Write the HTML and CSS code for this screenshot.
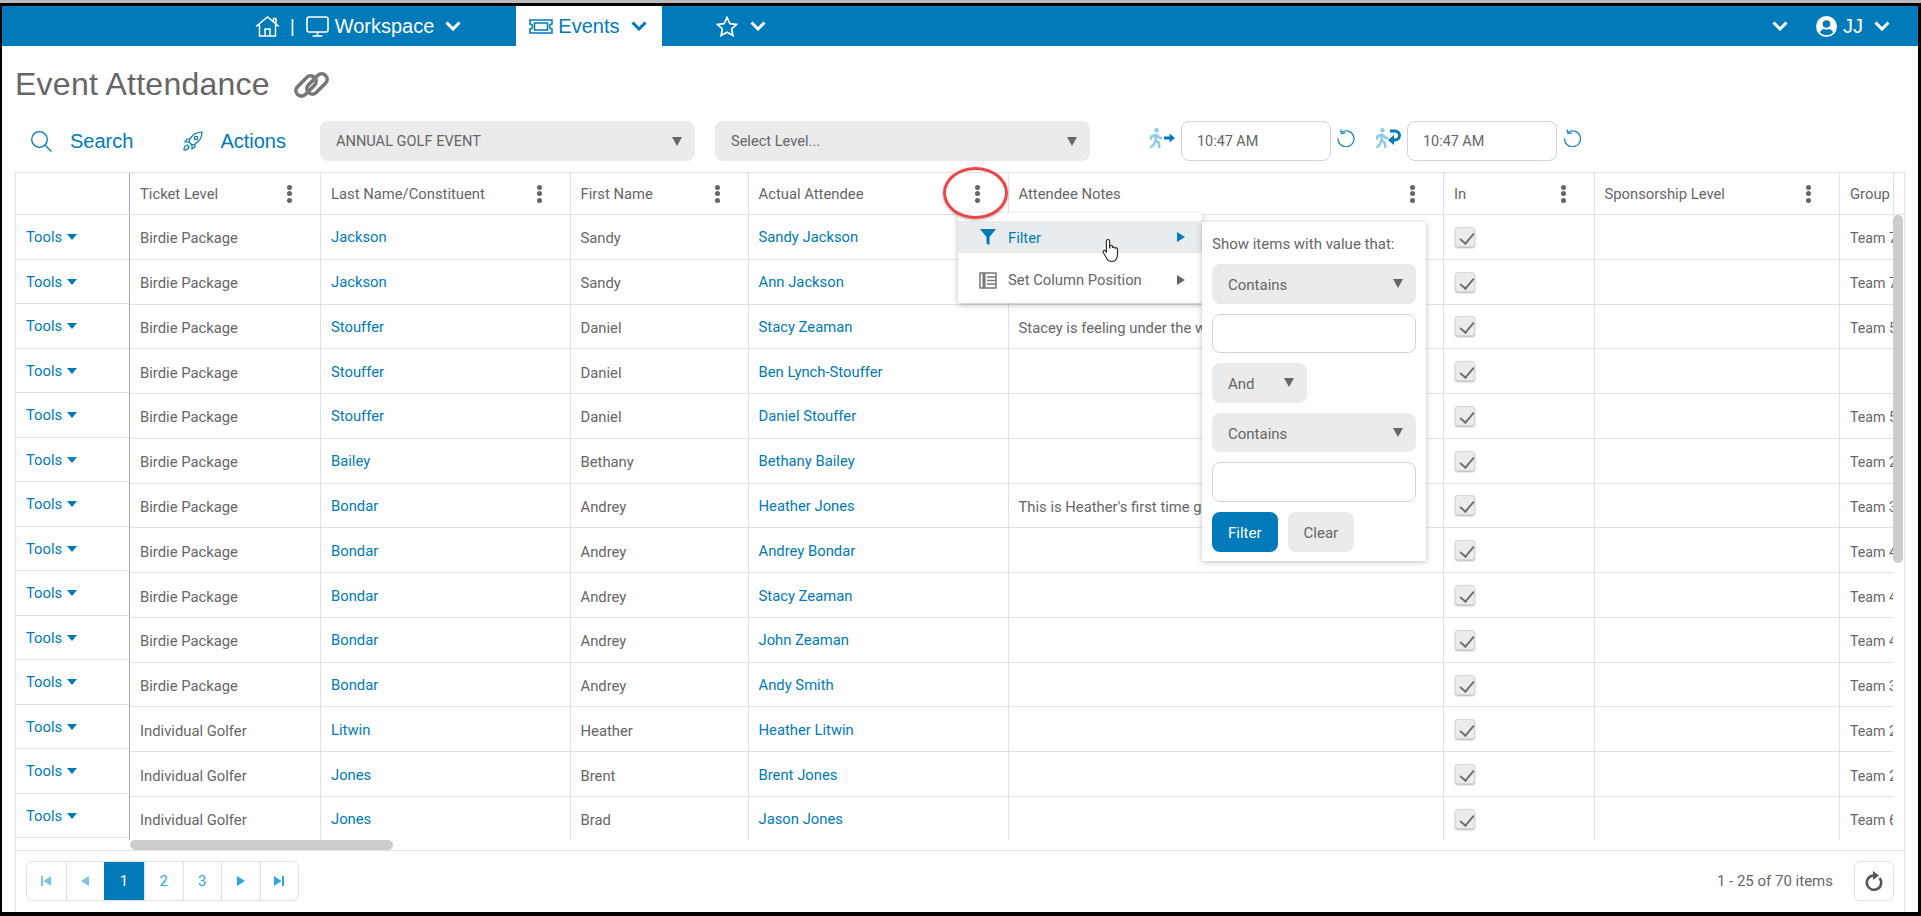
FILE: index.html
```html
<!DOCTYPE html>
<html lang="en">
<head>
  <meta charset="UTF-8" />
  <title>Event Attendance</title>
  <link rel="stylesheet" href="styles.css">
</head>
<body>
  <div class="page">
    <nav class="topnav">
      <svg class="home" width="25" height="21" viewBox="0 0 25 21" fill="none" stroke="#fff" stroke-width="1.5"><path d="M1 10.5 12.5 1 24 10.5M18.5 5.5V2.5H21V7.5M4.5 8.5V20H20.500V8.500M10 20v-7h5v7"/></svg>
      <span class="nav-sep">|</span>
      <svg class="monitor" width="23" height="21" viewBox="0 0 23 21" fill="none" stroke="#fff" stroke-width="1.6"><rect x="1" y="1" width="21" height="15" rx="2"/><path d="M11.500 16v4M6.500 20h10"/></svg>
      <span class="nav-label">Workspace</span>
      <svg class="chev" width="16" height="10" viewBox="0 0 16 10" fill="none" stroke="#fff" stroke-width="3"><path d="M1.500 1.500 8 8l6.500-6.500"/></svg>
      <div class="nav-tab">
        <svg width="24" height="15" viewBox="0 0 24 15" fill="none" stroke="#007ab8" stroke-width="1.500"><path d="M1 1H23V5a2.500 2.500 0 0 0 0 5v4H1V10a2.500 2.500 0 0 0 0-5Z"/><rect x="5.500" y="4" width="13" height="7"/></svg>
        <span class="nav-label">Events</span>
        <svg class="chev" width="16" height="10" viewBox="0 0 16 10" fill="none" stroke="#007ab8" stroke-width="3"><path d="M1.500 1.500 8 8l6.500-6.500"/></svg>
      </div>
      <svg class="star" width="22" height="21" viewBox="0 0 22 21" fill="none" stroke="#fff" stroke-width="1.700"><path d="M11 1.500 13.900 7.600 20.500 8.400 15.600 13 16.900 19.500 11 16.300 5.100 19.500 6.400 13 1.500 8.400 8.100 7.600Z"/></svg>
      <svg class="chev" width="16" height="10" viewBox="0 0 16 10" fill="none" stroke="#fff" stroke-width="3"><path d="M1.500 1.500 8 8l6.500-6.500"/></svg>
      <div class="nav-right">
        <svg class="chev-wide" width="16" height="10" viewBox="0 0 16 10" fill="none" stroke="#fff" stroke-width="3"><path d="M1.500 1.500 8 8l6.500-6.500"/></svg>
        <svg class="user" width="21" height="21" viewBox="0 0 21 21"><circle cx="10.500" cy="10.500" r="10.500" fill="#fff"/><circle cx="10.500" cy="8" r="3.800" fill="#007ab8"/><path d="M4 16.500c1-2.800 3-3.500 4-3.500 1.600.8 3.400.8 5 0 1 0 3 .7 4 3.500-3.600 3.500-9.400 3.500-13 0Z" fill="#007ab8"/></svg>
        <span class="nav-label">JJ</span>
        <svg class="chev" width="16" height="10" viewBox="0 0 16 10" fill="none" stroke="#fff" stroke-width="3"><path d="M1.500 1.500 8 8l6.500-6.500"/></svg>
      </div>
    </nav>

    <header class="title-bar">
      <h1>Event Attendance</h1>
      <svg width="37" height="28" viewBox="0 0 37 28" fill="none" stroke="#777" stroke-width="3.600"><rect x="1" y="9.500" width="24" height="11" rx="5.500" transform="rotate(-45 13 15)"/><rect x="12" y="7.500" width="24" height="11" rx="5.500" transform="rotate(-45 24 13)"/></svg>
    </header>

    <div class="toolbar">
      <svg class="tool-icon" width="21" height="21" viewBox="0 0 21 21" fill="none" stroke="#007ab8" stroke-width="1.300"><circle cx="8.500" cy="8.500" r="7.800"/><path d="m14 14 6.500 6.500"/></svg>
      <a class="tool-link search-link">Search</a>
      <svg class="tool-icon" width="21" height="21" viewBox="0 0 21 21" fill="none" stroke="#007ab8" stroke-width="1.200"><path d="M20 1c-5 0-9 2-12 7l-1 3 3 3 3-1c5-3 7-7 7-12Z"/><circle cx="14" cy="7" r="1.700"/><path d="M8 8H5L3 11h4M13 13v3l-3 2v-4M5 14c-2 .5-3 2.500-3 5 2.500 0 4.500-1 5-3Z"/></svg>
      <a class="tool-link actions-link">Actions</a>
      <div class="select select-wide"><span>ANNUAL GOLF EVENT</span><i class="caret"></i></div>
      <div class="select select-wide level"><span>Select Level...</span><i class="caret"></i></div>

      <svg class="walk-in" width="27" height="20" viewBox="0 0 27 20" fill="none"><circle cx="7.500" cy="2.200" r="2.200" fill="#8fcbe8"/><path d="M7 6 6.500 12 9.500 14.500 10.500 20M6.500 12 5 16 1.500 20M7 6.500 2.500 8.500 1.500 11.500M7 6.500 10 9.500 13 10.500" stroke="#8fcbe8" stroke-width="2.500"/><path d="M15 10h6" stroke="#007ab8" stroke-width="3"/><path d="M20.500 5.500 26 10l-5.500 4.500Z" fill="#007ab8"/></svg>
      <input class="time" value="10:47 AM">
      <svg class="undo" width="18" height="18" viewBox="0 0 18 18" fill="none" stroke="#1a86c4" stroke-width="1.300"><path d="M4.500 3.200A8 8 0 1 1 1 9.500"/><path d="M3.600.5 4.500 4.500 8.500 3.800"/></svg>
      <svg class="walk-back" width="25" height="20" viewBox="0 0 25 20" fill="none"><circle cx="6.500" cy="2.200" r="2.200" fill="#8fcbe8"/><path d="M6 6 5.500 12 8.500 14.500 9.500 20M5.500 12 4 16 .5 20M6 6.500 1.500 8.500.5 11.500M6 6.500 9 9.500 12 10.500" stroke="#8fcbe8" stroke-width="2.500"/><path d="M14 3h5a4.500 4.500 0 0 1 0 9h-2" stroke="#007ab8" stroke-width="3"/><path d="M18 7v10l-6-5Z" fill="#007ab8"/></svg>
      <input class="time" value="10:47 AM">
      <svg class="undo" width="19" height="18" viewBox="0 0 18 18" fill="none" stroke="#1a86c4" stroke-width="1.300"><path d="M4.500 3.200A8 8 0 1 1 1 9.500"/><path d="M3.600.5 4.500 4.500 8.500 3.800"/></svg>
    </div>

    <section class="grid">
      <div class="grid-head">
        <div class="frozen-head"></div>
        <div class="cols">
          <div class="hcell"><span>Ticket Level</span><i class="dots"></i></div>
          <div class="hcell"><span>Last Name/Constituent</span><i class="dots"></i></div>
          <div class="hcell"><span>First Name</span><i class="dots"></i></div>
          <div class="hcell"><span>Actual Attendee</span><i class="dots"></i></div>
          <div class="hcell"><span>Attendee Notes</span><i class="dots"></i></div>
          <div class="hcell"><span>In</span><i class="dots"></i></div>
          <div class="hcell"><span>Sponsorship Level</span><i class="dots"></i></div>
          <div class="hcell"><span>Group</span></div>
        </div>
        <div class="head-spacer"></div>
      </div>

      <div class="grid-body">
        <div class="frozen">
          <div class="tools">Tools<i class="tools-caret"></i></div>
          <div class="tools">Tools<i class="tools-caret"></i></div>
          <div class="tools">Tools<i class="tools-caret"></i></div>
          <div class="tools">Tools<i class="tools-caret"></i></div>
          <div class="tools">Tools<i class="tools-caret"></i></div>
          <div class="tools">Tools<i class="tools-caret"></i></div>
          <div class="tools">Tools<i class="tools-caret"></i></div>
          <div class="tools">Tools<i class="tools-caret"></i></div>
          <div class="tools">Tools<i class="tools-caret"></i></div>
          <div class="tools">Tools<i class="tools-caret"></i></div>
          <div class="tools">Tools<i class="tools-caret"></i></div>
          <div class="tools">Tools<i class="tools-caret"></i></div>
          <div class="tools">Tools<i class="tools-caret"></i></div>
          <div class="tools">Tools<i class="tools-caret"></i></div>
        </div>
        <div class="rows">
          <div class="cols row"><div class="cell">Birdie Package</div><div class="cell lnk">Jackson</div><div class="cell">Sandy</div><div class="cell lnk">Sandy Jackson</div><div class="cell"></div><div class="cell"><i class="check"></i></div><div class="cell"></div><div class="cell">Team 7</div></div>
          <div class="cols row"><div class="cell">Birdie Package</div><div class="cell lnk">Jackson</div><div class="cell">Sandy</div><div class="cell lnk">Ann Jackson</div><div class="cell"></div><div class="cell"><i class="check"></i></div><div class="cell"></div><div class="cell">Team 7</div></div>
          <div class="cols row"><div class="cell">Birdie Package</div><div class="cell lnk">Stouffer</div><div class="cell">Daniel</div><div class="cell lnk">Stacy Zeaman</div><div class="cell">Stacey is feeling under the weather</div><div class="cell"><i class="check"></i></div><div class="cell"></div><div class="cell">Team 5</div></div>
          <div class="cols row"><div class="cell">Birdie Package</div><div class="cell lnk">Stouffer</div><div class="cell">Daniel</div><div class="cell lnk">Ben Lynch-Stouffer</div><div class="cell"></div><div class="cell"><i class="check"></i></div><div class="cell"></div><div class="cell"></div></div>
          <div class="cols row"><div class="cell">Birdie Package</div><div class="cell lnk">Stouffer</div><div class="cell">Daniel</div><div class="cell lnk">Daniel Stouffer</div><div class="cell"></div><div class="cell"><i class="check"></i></div><div class="cell"></div><div class="cell">Team 5</div></div>
          <div class="cols row"><div class="cell">Birdie Package</div><div class="cell lnk">Bailey</div><div class="cell">Bethany</div><div class="cell lnk">Bethany Bailey</div><div class="cell"></div><div class="cell"><i class="check"></i></div><div class="cell"></div><div class="cell">Team 2</div></div>
          <div class="cols row"><div class="cell">Birdie Package</div><div class="cell lnk">Bondar</div><div class="cell">Andrey</div><div class="cell lnk">Heather Jones</div><div class="cell">This is Heather's first time golfing</div><div class="cell"><i class="check"></i></div><div class="cell"></div><div class="cell">Team 3</div></div>
          <div class="cols row"><div class="cell">Birdie Package</div><div class="cell lnk">Bondar</div><div class="cell">Andrey</div><div class="cell lnk">Andrey Bondar</div><div class="cell"></div><div class="cell"><i class="check"></i></div><div class="cell"></div><div class="cell">Team 4</div></div>
          <div class="cols row"><div class="cell">Birdie Package</div><div class="cell lnk">Bondar</div><div class="cell">Andrey</div><div class="cell lnk">Stacy Zeaman</div><div class="cell"></div><div class="cell"><i class="check"></i></div><div class="cell"></div><div class="cell">Team 4</div></div>
          <div class="cols row"><div class="cell">Birdie Package</div><div class="cell lnk">Bondar</div><div class="cell">Andrey</div><div class="cell lnk">John Zeaman</div><div class="cell"></div><div class="cell"><i class="check"></i></div><div class="cell"></div><div class="cell">Team 4</div></div>
          <div class="cols row"><div class="cell">Birdie Package</div><div class="cell lnk">Bondar</div><div class="cell">Andrey</div><div class="cell lnk">Andy Smith</div><div class="cell"></div><div class="cell"><i class="check"></i></div><div class="cell"></div><div class="cell">Team 3</div></div>
          <div class="cols row"><div class="cell">Individual Golfer</div><div class="cell lnk">Litwin</div><div class="cell">Heather</div><div class="cell lnk">Heather Litwin</div><div class="cell"></div><div class="cell"><i class="check"></i></div><div class="cell"></div><div class="cell">Team 2</div></div>
          <div class="cols row"><div class="cell">Individual Golfer</div><div class="cell lnk">Jones</div><div class="cell">Brent</div><div class="cell lnk">Brent Jones</div><div class="cell"></div><div class="cell"><i class="check"></i></div><div class="cell"></div><div class="cell">Team 2</div></div>
          <div class="cols row"><div class="cell">Individual Golfer</div><div class="cell lnk">Jones</div><div class="cell">Brad</div><div class="cell lnk">Jason Jones</div><div class="cell"></div><div class="cell"><i class="check"></i></div><div class="cell"></div><div class="cell">Team 6</div></div>
        </div>
        <div class="vscroll"></div>
      </div>

      <div class="hscroll"><div class="hthumb"></div></div>

      <footer class="pager-bar">
        <div class="pager">
          <a class="pg pg-off"><svg width="10" height="10" viewBox="0 0 10 10"><path d="M0 0h2v10H0ZM10 0v10L2.500 5Z"/></svg></a>
          <a class="pg pg-off"><svg width="8" height="10" viewBox="0 0 8 10"><path d="M8 0v10L0 5Z"/></svg></a>
          <a class="pg pg-active">1</a>
          <a class="pg">2</a>
          <a class="pg">3</a>
          <a class="pg"><svg width="8" height="10" viewBox="0 0 8 10"><path d="M0 0v10l8-5Z"/></svg></a>
          <a class="pg"><svg width="10" height="10" viewBox="0 0 10 10"><path d="M0 0v10l7.500-5ZM8 0h2v10H8Z"/></svg></a>
        </div>
        <span class="count">1 - 25 of 70 items</span>
        <a class="refresh"><svg width="18" height="20" viewBox="0 0 18 20" fill="none" stroke="#555" stroke-width="2.600"><path d="M14.500 7A7.200 7.200 0 1 1 8 4.500"/><path d="M8 0v9l6-4.500Z" fill="#555" stroke="none"/></svg></a>
      </footer>
    </section>
  </div>

  <div class="col-menu">
    <div class="menu-item on">
      <svg width="16" height="16" viewBox="0 0 16 16"><path d="M0 0h16L9.500 8v8l-3-1.500V8Z" fill="#007ab8"/></svg>
      <span>Filter</span><i class="arrow"></i>
    </div>
    <div class="menu-item">
      <svg width="18" height="17" viewBox="0 0 18 17" fill="none" stroke="#777" stroke-width="1.500"><rect x="1" y="1" width="16" height="15"/><path d="M5 1v15" stroke-width="3"/><path d="M8 5h9M8 8.500h9M8 12h9"/></svg>
      <span>Set Column Position</span><i class="arrow"></i>
    </div>
  </div>

  <div class="filter-panel">
    <div class="filter-label">Show items with value that:</div>
    <div class="select"><span>Contains</span><i class="caret"></i></div>
    <input class="filter-input">
    <div class="select select-and"><span>And</span><i class="caret"></i></div>
    <div class="select"><span>Contains</span><i class="caret"></i></div>
    <input class="filter-input">
    <div class="filter-btns">
      <button class="btn-filter">Filter</button>
      <button class="btn-clear">Clear</button>
    </div>
  </div>

  <div class="red-ring"></div>
  <svg class="hand" width="18" height="25" viewBox="0 0 18 25"><path d="M6 1.500c1 0 1.600.7 1.600 1.600V10h.3V8.500c0-1.600 2.600-1.600 2.600 0V10c0-1.400 2.500-1.400 2.500.2v.6c0-1.300 2.500-1.200 2.500.4V17c0 3-2 6.500-5.500 6.500-3 0-4.500-1.500-5.500-3.500L1.200 14.500c-.8-1.500 1-2.700 2.200-1.600L4.400 14V3c0-.9.6-1.500 1.600-1.500Z" fill="#fff" stroke="#222" stroke-width="1.100"/></svg>
</body>
</html>
```

FILE: styles.css
```css
* {
  box-sizing: border-box;
}

html,
body {
  margin: 0;
  height: 916px;
  overflow: hidden;
}

body {
  position: relative;
  background: #000;
  font-family: Roboto, Arial, sans-serif;
  font-size: 14.8px;
  color: #666;
}

i {
  display: block;
}

.page {
  height: 912px;
  margin: 0 3px 0 2px;
  background: #fff;
  border-top: 6px solid #000;
  position: relative;
}

/* the light strip over the black frame */
body::before {
  content: "";
  display: block;
  position: absolute;
  top: 0;
  left: 0;
  right: 0;
  height: 3px;
  background: #bbb;
  z-index: 1;
}

.topnav {
  display: flex;
  align-items: center;
  height: 40px;
  padding-left: 253px;
  background: #007ab8;
  color: #fff;
  font-family: "Liberation Sans", Arial, sans-serif;
  font-size: 20px;
}

.nav-sep {
  margin: 0 11px 0 10px;
  font-size: 18px;
}

.nav-label {
  margin-left: 6px;
}

.topnav .chev {
  margin-left: 11px;
}

.nav-tab {
  display: flex;
  align-items: center;
  height: 40px;
  margin-left: 55px;
  padding: 0 15px 0 13px;
  background: #fff;
  color: #007ab8;
}

.nav-tab .nav-label {
  margin-left: 5px;
}

.star {
  margin-left: 54px;
}

.topnav .star + .chev {
  margin-left: 12px;
}

.nav-right {
  display: flex;
  align-items: center;
  margin-left: auto;
  padding-right: 28px;
}

.user {
  margin-left: 28px;
}

.title-bar {
  display: flex;
  align-items: center;
  height: 75px;
  padding-left: 13px;
  padding-top: 2px;
}

.title-bar h1 {
  margin: 0 23px 0 0;
  font-family: "Liberation Sans", Arial, sans-serif;
  font-size: 32px;
  font-weight: 400;
  letter-spacing: 0.25px;
  color: #666;
}

.toolbar {
  display: flex;
  align-items: center;
  height: 40px;
  padding-left: 29px;
}

.tool-link {
  color: #007ab8;
  font-family: "Liberation Sans", Arial, sans-serif;
  font-size: 20px;
  margin-left: 18px;
}

.search-link {
  margin-right: 49px;
}

.actions-link {
  margin-left: 17px;
  margin-right: 34px;
}

.select {
  display: flex;
  align-items: center;
  justify-content: space-between;
  flex-shrink: 0;
  height: 39.6px;
  padding: 0 13px 0 16px;
  background: #ebebeb;
  border-radius: 8px;
}

.select span {
  padding-top: 2px;
}

.select-wide {
  width: 375px;
  height: 40px;
  font-size: 14.6px;
}

.select-wide span {
  padding-top: 0;
}

.level {
  margin-left: 20px;
}

.caret {
  width: 0;
  height: 0;
  border-left: 5.5px solid transparent;
  border-right: 5.5px solid transparent;
  border-top: 9px solid #666;
}

.walk-in {
  margin: -6px 5px 0 59px;
}

.walk-back {
  margin: -6px 6px 0 21px;
}

.time {
  width: 150px;
  height: 40px;
  padding: 0 15px;
  border: 1px solid #ced4da;
  border-radius: 8px;
  font-family: Roboto, Arial, sans-serif;
  font-size: 14.4px;
  color: #666;
}

.undo {
  margin: -6px 0 0 6px;
}

.grid {
  height: 740px;
  margin: 11px 13px 0 13px;
  border: 1px solid #dee2e6;
  border-bottom: 0;
}

.grid-head {
  display: flex;
  height: 42px;
  border-bottom: 1px solid #dee2e6;
}

.frozen-head {
  width: 114px;
  flex-shrink: 0;
  border-right: 1px solid #aaa;
}

.cols {
  display: grid;
  grid-template-columns: 190px 249.5px 178px 260px 435.5px 150.5px 245.5px 54px;
  width: 1763px;
  flex-shrink: 0;
}

.hcell {
  display: flex;
  align-items: center;
  justify-content: space-between;
  padding: 0 28px 0 10px;
  border-left: 1px solid #dee2e6;
  white-space: nowrap;
  overflow: hidden;
}

.hcell:first-child {
  border-left: 0;
}

.hcell:last-child {
  padding-right: 0;
}

.dots,
.dots::before,
.dots::after {
  width: 5px;
  height: 5px;
  border-radius: 50%;
  background: #666;
}

.dots {
  position: relative;
  flex-shrink: 0;
}

.dots::before,
.dots::after {
  content: "";
  position: absolute;
  left: 0;
}

.dots::before {
  top: -6.5px;
}

.dots::after {
  top: 6.5px;
}

.head-spacer {
  flex: 1;
  border-left: 1px solid #dee2e6;
}

.grid-body {
  position: relative;
  display: flex;
  height: 625px;
  overflow: hidden;
}

.frozen {
  width: 114px;
  flex-shrink: 0;
  border-right: 1px solid #aaa;
}

.tools {
  display: flex;
  align-items: center;
  height: 44.5px;
  padding: 1px 0 0 10px;
  border-bottom: 1px solid #dee2e6;
  color: #007ab8;
}

.tools-caret {
  width: 0;
  height: 0;
  margin-left: 5px;
  border-left: 5px solid transparent;
  border-right: 5px solid transparent;
  border-top: 6px solid #007ab8;
}

.rows {
  width: 1763px;
  flex-shrink: 0;
}

.row {
  height: 44.77px;
  border-bottom: 1px solid #dee2e6;
}

.cell {
  display: flex;
  align-items: center;
  padding: 3px 0 0 10px;
  border-left: 1px solid #dee2e6;
  white-space: nowrap;
  overflow: hidden;
}

.cell:first-child {
  border-left: 0;
}

.cell:last-child {
  font-size: 14.2px;
}

.cell.lnk {
  padding-top: 1px;
  color: #007ab8;
}

/* checkbox in the In column */
.check {
  position: relative;
  width: 20px;
  height: 20px;
  margin: -3px 0 0 1px;
  background: #ececec;
  border: 1px solid #d8d8d8;
  border-radius: 3px;
  box-shadow: 0 1px 2px rgba(0, 0, 0, 0.3);
}

.check::after {
  content: "";
  position: absolute;
  left: 6.5px;
  top: 2px;
  width: 6px;
  height: 12px;
  border-right: 2px solid #707070;
  border-bottom: 2px solid #707070;
  transform: rotate(40deg);
}

.vscroll {
  position: absolute;
  top: 0;
  right: 1px;
  width: 10px;
  height: 348px;
  background: #ccc;
  border-radius: 5px;
}

.hscroll {
  height: 10px;
}

.hthumb {
  width: 263px;
  height: 10px;
  margin-left: 114px;
  background: #ccc;
  border-radius: 5px;
}

.pager-bar {
  display: flex;
  align-items: center;
  height: 61px;
  padding: 0 10px;
  border-top: 1px solid #dee2e6;
}

.pager {
  display: flex;
  height: 40px;
  border: 1px solid #dee2e6;
  border-radius: 6px;
  overflow: hidden;
}

.pg {
  display: flex;
  align-items: center;
  justify-content: center;
  width: 38.5px;
  border-left: 1px solid #dee2e6;
  color: #2ea5e0;
  fill: #2ea5e0;
}

.pg:first-child {
  border-left: 0;
}

.pg-off {
  fill: #7cc3e8;
}

.pg-active {
  width: 40px;
  border-left: 0;
  background: #007ab8;
  color: #fff;
}

.count {
  margin-left: auto;
  margin-right: 21px;
  font-size: 15px;
}

.refresh {
  display: flex;
  align-items: center;
  justify-content: center;
  width: 40px;
  height: 40px;
  border: 1px solid #dee2e6;
  border-radius: 6px;
}

/* column menu, opened over the grid */
.col-menu {
  position: absolute;
  left: 958px;
  top: 213px;
  width: 244px;
  height: 90px;
  padding-top: 8px;
  background: #fff;
  box-shadow: 0 2px 6px rgba(0, 0, 0, 0.25);
}

.menu-item {
  display: flex;
  align-items: center;
  height: 32px;
  margin-bottom: 11px;
  padding: 0 17px 0 21px;
}

.menu-item.on span {
  padding-top: 1px;
}

.menu-item svg {
  margin-right: 11px;
  width: 18px;
}

.menu-item.on {
  background: #e9ecef;
  color: #007ab8;
}

.arrow {
  margin-left: auto;
  width: 0;
  height: 0;
  border-top: 5px solid transparent;
  border-bottom: 5px solid transparent;
  border-left: 8px solid #666;
}

.on .arrow {
  border-left-color: #007ab8;
}

.filter-panel {
  position: absolute;
  left: 1202px;
  top: 222px;
  width: 224px;
  height: 339px;
  padding: 10px;
  display: flex;
  flex-direction: column;
  gap: 10px;
  background: #fff;
  box-shadow: 0 1px 6px rgba(0, 0, 0, 0.25);
  font-size: 15px;
}

.filter-label {
  height: 22px;
  padding-top: 1px;
  line-height: 22px;
  white-space: nowrap;
}

.filter-input {
  height: 39.6px;
  border: 1px solid #ced4da;
  border-radius: 8px;
  flex-shrink: 0;
}

.select-and {
  width: 95px;
}

.filter-btns {
  display: flex;
  gap: 10px;
}

.filter-btns button {
  height: 39.6px;
  padding: 2px 16px 0;
  border: 0;
  border-radius: 8px;
  font-family: Roboto, Arial, sans-serif;
  font-size: 15px;
}

.btn-filter {
  background: #007ab8;
  color: #fff;
}

.btn-clear {
  background: #ebebeb;
  color: #666;
}

.red-ring {
  position: absolute;
  left: 943px;
  top: 167px;
  width: 65px;
  height: 52px;
  border: 3.5px solid #ec4548;
  border-radius: 50%;
  box-shadow: 0 1px 3px rgba(0, 0, 0, 0.3);
}

.hand {
  position: absolute;
  left: 1102px;
  top: 238px;
}
```
